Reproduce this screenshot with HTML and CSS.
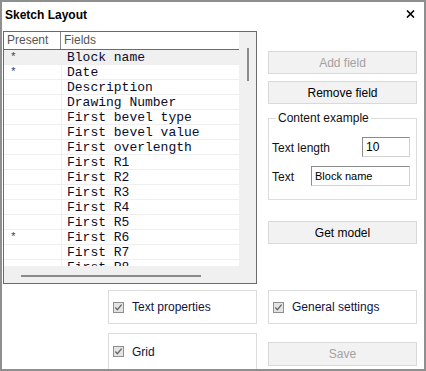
FILE: index.html
```html
<!DOCTYPE html>
<html lang="en">

<head>
    <meta charset="UTF-8">
    <meta name="viewport" content="width=device-width, initial-scale=1.0">
    <title>Sketch Layout</title>
    <link rel="stylesheet" href="styles.css">
</head>

<body>
    <div class="window">
        <div class="titlebar">
            <span class="title">Sketch Layout</span>
            <svg class="close" width="9" height="8" viewBox="0 0 9 8">
                <path d="M1 0.5 L8 7.5 M8 0.5 L1 7.5" stroke="#000" stroke-width="1.6" fill="none"/>
            </svg>
        </div>
        <div class="content">
            <div class="top">
                <div class="listbox">
                    <div class="list-area">
                        <div class="list-head">
                            <div class="head-present">Present</div>
                            <div class="head-fields">Fields</div>
                        </div>
                        <div class="rows">
                            <div class="row selected"><span class="present">*</span><span class="field">Block name</span></div>
                            <div class="row"><span class="present">*</span><span class="field">Date</span></div>
                            <div class="row"><span class="present"></span><span class="field">Description</span></div>
                            <div class="row"><span class="present"></span><span class="field">Drawing Number</span></div>
                            <div class="row"><span class="present"></span><span class="field">First bevel type</span></div>
                            <div class="row"><span class="present"></span><span class="field">First bevel value</span></div>
                            <div class="row"><span class="present"></span><span class="field">First overlength</span></div>
                            <div class="row"><span class="present"></span><span class="field">First R1</span></div>
                            <div class="row"><span class="present"></span><span class="field">First R2</span></div>
                            <div class="row"><span class="present"></span><span class="field">First R3</span></div>
                            <div class="row"><span class="present"></span><span class="field">First R4</span></div>
                            <div class="row"><span class="present"></span><span class="field">First R5</span></div>
                            <div class="row"><span class="present">*</span><span class="field">First R6</span></div>
                            <div class="row"><span class="present"></span><span class="field">First R7</span></div>
                            <div class="row"><span class="present"></span><span class="field">First R8</span></div>
                        </div>
                    </div>
                    <div class="vscroll"><div class="vthumb"></div></div>
                    <div class="hscroll"><div class="hthumb"></div></div>
                </div>

                <div class="side">
                    <button class="btn" disabled>Add field</button>
                    <button class="btn gap">Remove field</button>
                    <fieldset class="group">
                        <legend>Content example</legend>
                        <div class="field-row first">
                            <label for="textLength">Text length</label>
                            <input type="text" id="textLength" class="num-input" value="10">
                        </div>
                        <div class="field-row">
                            <label for="textValue">Text</label>
                            <input type="text" id="textValue" class="text-input" value="Block name">
                        </div>
                    </fieldset>
                    <button class="btn model">Get model</button>
                </div>
            </div>

            <div class="bottom">
                <label class="check-box">
                    <svg class="check" width="11" height="11" viewBox="0 0 11 11">
                        <rect x="0.5" y="0.5" width="10" height="10" fill="#e4e4e4" stroke="#8e8e8e"/>
                        <path d="M2.3 5.6 L4.4 7.8 L8.6 2.6" fill="none" stroke="#6a6a6a" stroke-width="1.4"/>
                    </svg>
                    Text properties
                </label>
                <label class="check-box">
                    <svg class="check" width="11" height="11" viewBox="0 0 11 11">
                        <rect x="0.5" y="0.5" width="10" height="10" fill="#e4e4e4" stroke="#8e8e8e"/>
                        <path d="M2.3 5.6 L4.4 7.8 L8.6 2.6" fill="none" stroke="#6a6a6a" stroke-width="1.4"/>
                    </svg>
                    General settings
                </label>
                <label class="check-box open">
                    <svg class="check" width="11" height="11" viewBox="0 0 11 11">
                        <rect x="0.5" y="0.5" width="10" height="10" fill="#e4e4e4" stroke="#8e8e8e"/>
                        <path d="M2.3 5.6 L4.4 7.8 L8.6 2.6" fill="none" stroke="#6a6a6a" stroke-width="1.4"/>
                    </svg>
                    Grid
                </label>
                <button class="btn save" disabled>Save</button>
            </div>
        </div>
    </div>
</body>

</html>
```

FILE: styles.css
```css
body {
    margin: 0;
    font-family: 'Liberation Sans', Arial, sans-serif;
    font-size: 12px;
    background-color: #fff;
}

.window {
    width: 426px;
    height: 371px;
    box-sizing: border-box;
    border: 2px solid #8f8f8f;
    background-color: #fff;
    overflow: hidden;
}

.titlebar {
    height: 29px;
    box-sizing: border-box;
    padding: 6px 9px 0 3px;
    display: flex;
    justify-content: space-between;
    align-items: flex-start;
}

.title {
    font-weight: bold;
    font-size: 12px;
    line-height: 14px;
    color: #000;
}

.close {
    margin-top: 2px;
}

.content {
    padding-left: 1px;
}

.top {
    display: flex;
    gap: 11px;
}

/* list */

.listbox {
    width: 254px;
    height: 253px;
    box-sizing: border-box;
    border: 1px solid #6b6b6b;
    display: grid;
    grid-template-columns: 1fr 17px;
    grid-template-rows: 1fr 17px;
}

.list-area {
    overflow: hidden;
}

.list-head {
    display: flex;
    height: 17px;
    border-bottom: 1px solid #6b6b6b;
    line-height: 17px;
    color: #555;
}

.head-present {
    width: 53px;
    padding-left: 3px;
    border-right: 1px solid #8a8a8a;
}

.head-fields {
    padding-left: 3px;
}

.row {
    display: flex;
    height: 14px;
    border-bottom: 1px solid #efefef;
    font-family: 'Liberation Mono', 'Courier New', monospace;
    font-size: 13px;
    line-height: 16px;
    color: #0b0b2a;
    white-space: nowrap;
}

.row.selected {
    background-color: #f0f0f0;
}

.present {
    width: 51px;
    padding-left: 6px;
    border-right: 1px solid #efefef;
    font-size: 11px;
    line-height: 14px;
    color: #3a3a6a;
}

.field {
    padding-left: 5px;
}

.vscroll {
    background-color: #f0f0f0;
    position: relative;
}

.vthumb {
    position: absolute;
    left: 8px;
    top: 16px;
    width: 2px;
    height: 33px;
    background-color: #8a8a8a;
}

.hscroll {
    grid-column: 1 / 3;
    background-color: #f0f0f0;
    position: relative;
}

.hthumb {
    position: absolute;
    left: 17px;
    top: 9px;
    width: 180px;
    height: 2px;
    background-color: #8a8a8a;
}

/* right side */

.side {
    width: 149px;
    padding-top: 20px;
    display: flex;
    flex-direction: column;
}

.btn {
    height: 23px;
    width: 149px;
    margin: 0;
    padding: 0;
    border: 1px solid #d9d9d9;
    background-color: #f2f2f2;
    font-family: 'Liberation Sans', Arial, sans-serif;
    font-size: 12px;
    color: #000;
}

.btn:disabled {
    color: #a2a2a2;
}

.btn.gap {
    margin-top: 7px;
}

.btn.model {
    margin-top: 21px;
}

.group {
    margin: 7px 0 0 0;
    padding: 0 6px 13px 3px;
    border: 1px solid #dcdcdc;
}

.group legend {
    margin-left: 4px;
    padding: 0 2px;
    line-height: 14px;
    color: #111;
}

.field-row {
    display: flex;
    justify-content: space-between;
    align-items: center;
    height: 20px;
    margin-top: 9px;
    color: #111;
}

.field-row.first {
    margin-top: 12px;
}

.field-row label {
    padding-top: 2px;
}

.field-row input {
    height: 20px;
    box-sizing: border-box;
    margin: 0;
    padding: 0 3px;
    border: 1px solid #d2d2d2;
    border-top-color: #8c8c8c;
    border-left-color: #8c8c8c;
    font-family: 'Liberation Sans', Arial, sans-serif;
    color: #000;
}

.num-input {
    width: 48px;
    font-size: 12px;
}

.text-input {
    width: 99px;
    font-size: 11px;
    padding-left: 2px;
}

/* bottom */

.bottom {
    margin: 6px 0 0 105px;
    display: grid;
    grid-template-columns: 149px 149px;
    column-gap: 11px;
    row-gap: 9px;
}

.check-box {
    height: 34px;
    box-sizing: border-box;
    border: 1px solid #dcdcdc;
    display: flex;
    align-items: center;
    gap: 8px;
    padding-left: 4px;
    color: #12123f;
}

.check-box.open {
    height: 36px;
    border-bottom: none;
}

.btn.save {
    margin-top: 9px;
    height: 24px;
}
```
